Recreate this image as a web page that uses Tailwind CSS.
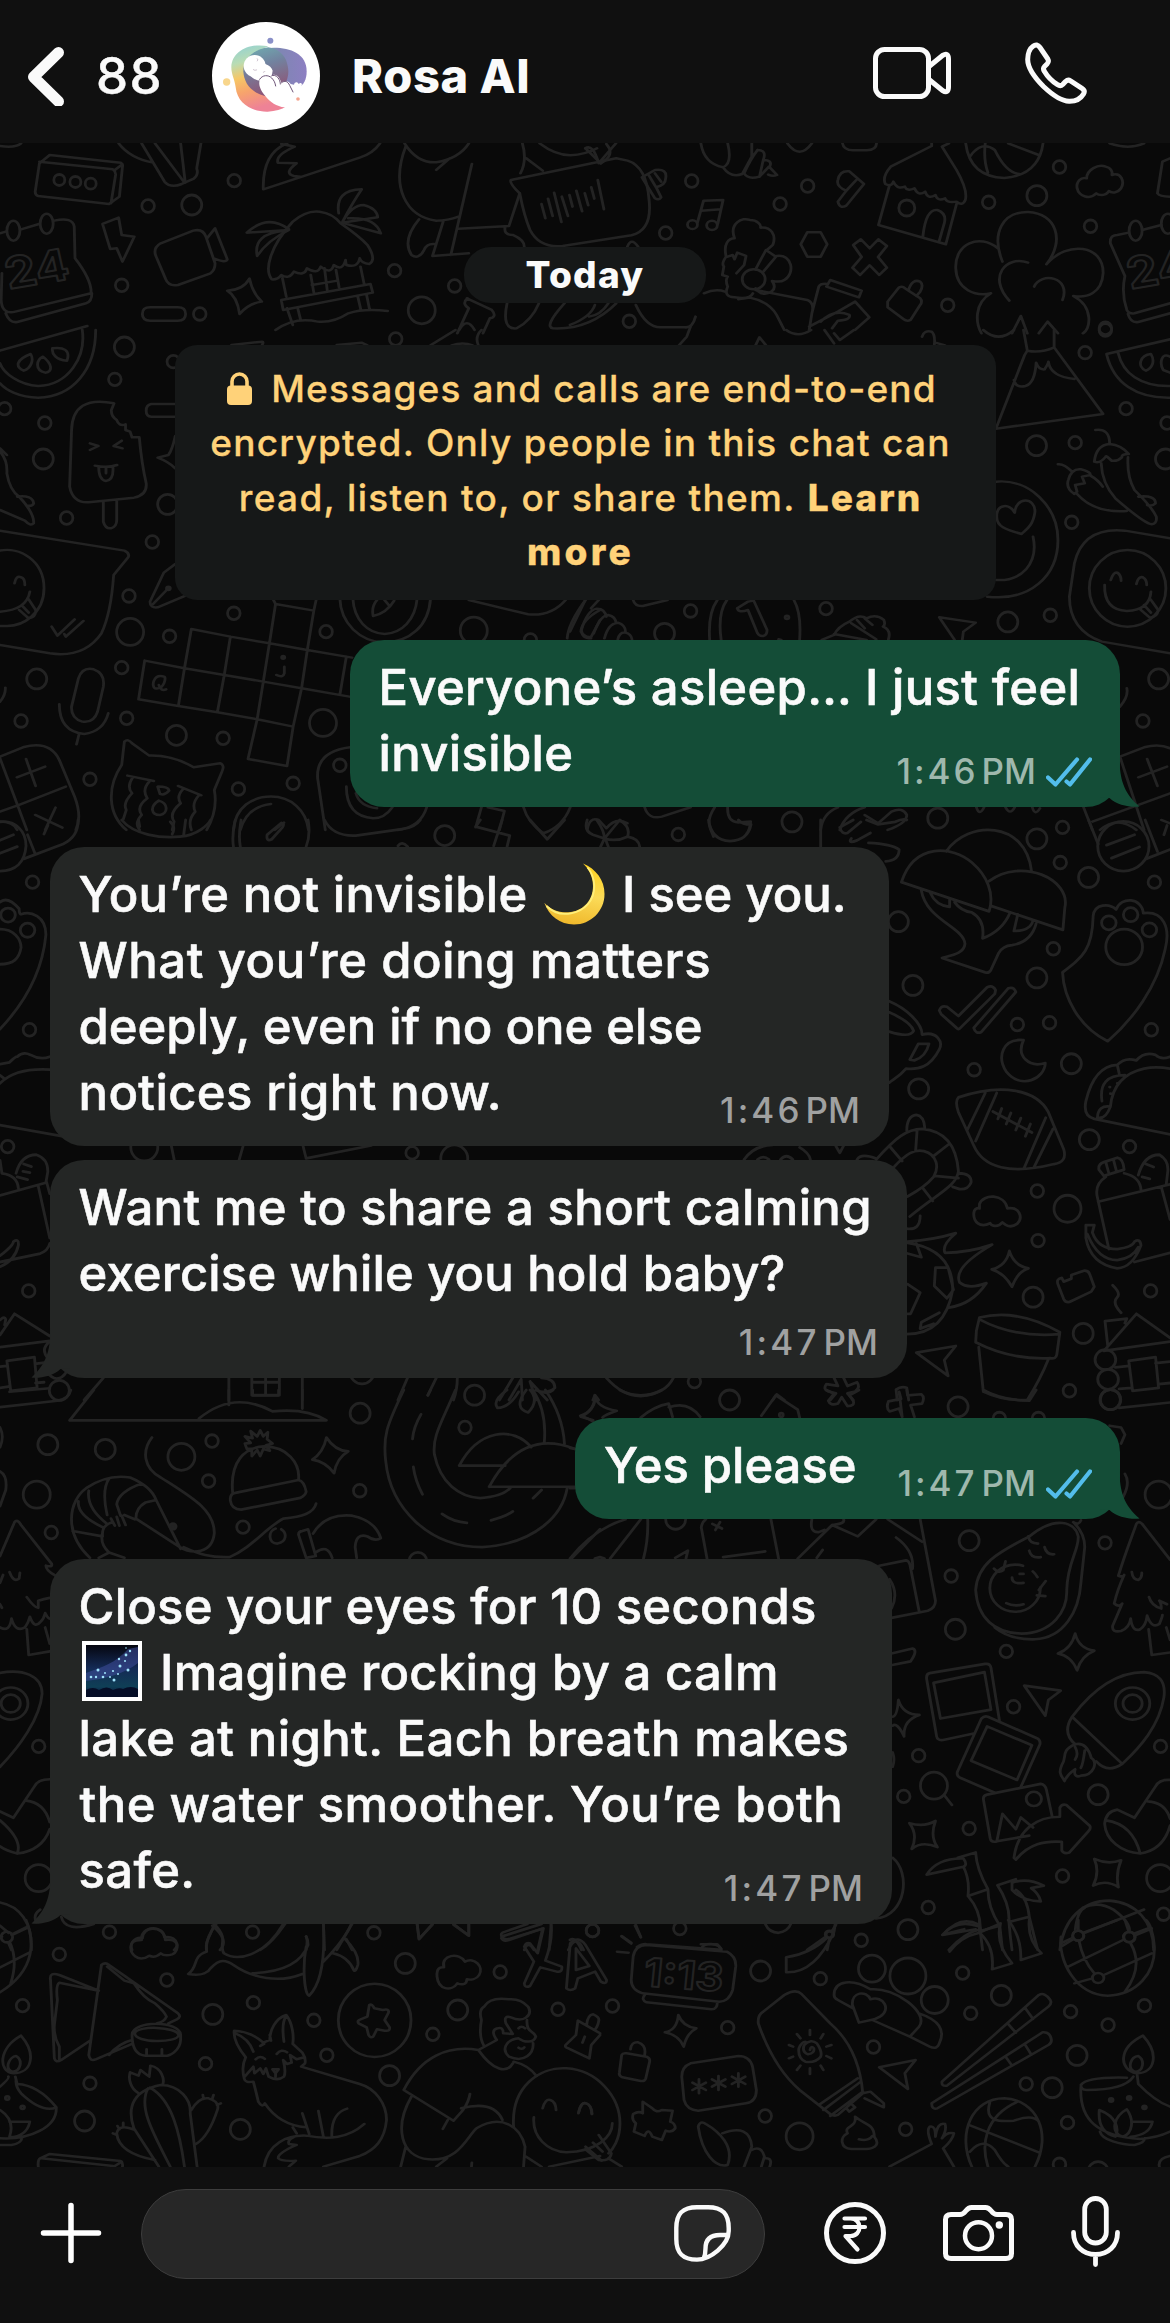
<!DOCTYPE html>
<html lang="en">
<head>
<meta charset="utf-8">
<meta name="viewport" content="width=1170">
<title>Rosa AI</title>
<script src="https://cdn.jsdelivr.net/npm/@tailwindcss/browser@4"></script>
</head>
<body class="bg-[#090909] font-['Inter',sans-serif] text-[#fafafa]">
<div class="flex h-[2323px] w-[1170px] flex-col overflow-hidden">

<header class="flex h-[143px] shrink-0 items-center bg-[#101010] pt-[9px] pr-[83px] pl-[27px]">
  <svg class="h-[60px] w-[38px]" viewBox="0 0 38 60" fill="none" stroke="#fafafa" stroke-width="11" stroke-linecap="round" stroke-linejoin="round"><path d="M31.5 6.5 6.5 31 31.5 55.5"/></svg>
  <span class="ml-[31px] w-[67px] text-[51px] leading-[60px] font-medium tracking-[1.5px] whitespace-nowrap [-webkit-text-stroke:0.4px]">88</span>
  <svg class="ml-[49px] size-[108px] rounded-full bg-white" viewBox="36 36 324 324">
    <defs>
      <linearGradient id="a1" x1="0" y1="0" x2="0.25" y2="1"><stop offset="0" stop-color="#8fd0d6"/><stop offset=".28" stop-color="#b9dcb4"/><stop offset=".5" stop-color="#f6c766"/><stop offset=".72" stop-color="#f7a46c"/><stop offset="1" stop-color="#ee8296"/></linearGradient>
      <linearGradient id="a2" x1="0" y1="0" x2="1" y2="0"><stop offset="0" stop-color="#77b3b5"/><stop offset=".5" stop-color="#7f86b4"/><stop offset="1" stop-color="#8d7fc2"/></linearGradient>
      <linearGradient id="a3" x1="0" y1="0" x2=".3" y2="1"><stop offset="0" stop-color="#6fb0b2"/><stop offset=".45" stop-color="#72829f"/><stop offset="1" stop-color="#8e5577"/></linearGradient>
    </defs>
    <path fill="url(#a2)" d="M160 122c60-18 160-14 160 62 0 24-8 42-26 50l-70 10-60-40z"/>
    <path fill="url(#a1)" d="M205 109C150 98 96 122 94 172c0 22 10 36 13 60 5 50 50 74 96 73 24-1 42-6 56-16l-40-30-60-30-20-50 20-50z"/>
    <path fill="url(#a3)" d="M205 112c-50 8-76 38-75 72 2 40 28 68 74 76l50-34c14-30 14-46 4-76-10-20-28-34-53-38z"/>
    <g fill="#fff"><circle cx="164" cy="168" r="33"/><path d="M150 196c10 12 24 18 38 16 4-8 16-6 24-12 6-6 4-12 6-18-2-8-10-16-22-20l-30-10z"/><path d="M178 214c4-14 20-20 36-14 2-8 16-8 22 2 4 6 6 10 8 16 8-8 22-6 28 4l10 2c2-8 10-10 14-2 8-8 14 2 6 10 6 10 2 24-8 28-2 22-18 34-40 32-24-2-44-16-58-34-12-14-20-28-18-44z"/></g>
    <g fill="none" stroke="#6d5578" stroke-width="3" stroke-linecap="round"><path d="M179 208c8-14 26-14 36-4 8 8 10 14 12 24M217 196c10-1 16 4 20 12 3 6 4 10 4 14M245 218c10-8 18-4 24 8l10 20"/><path stroke="#b9a9bb" stroke-width="2" d="M160 179q4 4 10 1M190 187q3 0 5-3M172 146q4 4 0 7"/></g>
    <circle cx="211" cy="92" r="9" fill="#8a90c8"/><circle cx="80" cy="216" r="11" fill="#f8d68c"/><circle cx="294" cy="267" r="5.500" fill="#f4a48e"/>
  </svg>
  <h1 class="ml-[32px] text-[47px] leading-[60px] font-extrabold tracking-[0.600px] whitespace-nowrap">Rosa AI</h1>
  <div class="mb-[6px] ml-auto flex items-center gap-[74px]">
    <svg class="h-[52px] w-[78px]" viewBox="0 0 78 52" fill="none" stroke="#fafafa" stroke-width="5" stroke-linejoin="round"><rect x="2.500" y="2.500" width="53" height="47" rx="9"/><path d="M56 19.500 69.500 8.500Q75.500 5 75.500 12V40Q75.500 47 69.500 43.500L56 32.500"/></svg>
    <svg class="h-[62px] w-[62px]" viewBox="0 0 62 62" fill="none" stroke="#fafafa" stroke-width="5" stroke-linejoin="round"><path d="M2.700 17.500C2.800 11 4 7 8 4.200Q12 1.200 15 5.500L22.800 17Q24.300 19.500 22 22L19.500 24.500Q17.500 26.500 19.500 29.500C23 35.500 27.500 39.500 32.500 42.700Q35.500 44.600 37.700 42.500L40.500 39.500Q43 37.200 45.500 38.800L57 46.300Q60.500 48.500 58.500 52C55.500 57 50 59.500 44 59.300C36 59 27 52.500 18.500 44.500C9.500 35.500 2.700 26 2.700 17.500Z"/></svg>
  </div>
</header>

<main class="relative h-[2024px] shrink-0 overflow-hidden">
  <svg class="absolute inset-0 h-[2024px] w-[1170px]" viewBox="0 143 1170 2024" fill="none" stroke="#232323" stroke-width="7.500" stroke-linecap="round" stroke-linejoin="round" aria-hidden="true">
    <g transform="scale(.3827 .3333)">
      <path d="M92 575 103 490 130 465 315 488Q322 492 320 500L312 590 285 612 100 588Q92 585 92 575ZM103 485 295 508Q303 515 302 525L290 610M300 510 320 493M0 438Q40 445 55 430"/>
      <path d="M310 430Q340 475 400 488M370 430 430 545Q445 565 475 552L505 537Q520 525 514 505L525 430M405 430 482 548M472 430 484 548"/>
      <path d="M750 430Q685 460 688 568L940 473Q975 460 993 430M735 432Q750 435 770 440 720 465 726 488L775 490Q740 520 768 528L785 530"/>
      <path d="M1057 430Q1090 490 1140 487 1200 475 1225 430M1140 510 1175 475M1060 440C1020 560 1060 650 1140 662Q1170 662 1198 650M1233 492 1178 765M1198 686 1330 678 1358 580M1095 658Q1050 720 1075 765 1095 780 1108 750 1115 730 1135 732M1158 665 1130 768 1225 760M1320 680Q1315 705 1340 705 1370 720 1370 740"/>
      <path d="M1365 430Q1378 480 1360 520M1375 475 1418 512M1335 540Q1330 550 1358 580 1370 650 1385 690 1410 745 1470 738L1650 706Q1705 690 1696 600 1690 500 1640 482L1610 475 1335 540M1410 430Q1450 465 1490 466 1530 464 1560 445M1530 445 1570 490"/>
      <path d="M1415 612 1425 655M1432 596 1444 648M1448 578 1467 666M1468 590 1484 648M1488 585 1496 620M1506 572 1521 634M1528 580 1537 616M1545 562 1553 596M1562 540 1578 628"/>
      <path d="M268 672 310 653 318 705 351 710 320 785 305 745 288 747ZM408 770Q398 745 420 730L505 692Q530 685 538 710L562 790Q562 810 550 820L465 855Q440 860 432 835ZM541 715 562 685 594 778Q590 790 560 776"/>
      <path d="M0 700 15 695M55 688 102 672M142 662Q190 650 194 680L196 775Q240 840 238 880L40 935Q5 945 3 900L5 820M15 940Q25 970 45 966L225 910Q240 905 240 880"/><ellipse cx="35" cy="692" rx="17" ry="30"/><ellipse cx="122" cy="671" rx="17" ry="30"/>
      <path d="M372 942Q372 922 392 922H465Q485 922 485 942T465 962H392Q372 962 372 942ZM652 836Q660 880 684 905 650 910 626 942 620 890 594 872 635 870 652 836Z"/>
      <path d="M710 838C690 810 705 740 765 665Q800 630 835 635 870 640 890 670 940 710 960 735 985 780 965 792 945 790 940 775 935 805 905 795 903 785 903 780 895 815 872 795 865 825 838 800 830 825 802 805 795 830 768 815 755 840 735 825 725 840 710 838ZM738 835 748 890M812 825 820 878M848 805 855 870M878 810 886 862M942 800 952 855M815 855 882 842M735 900 968 852 974 878 740 930ZM750 925 765 975M778 925 786 962M935 890 943 930M958 885 966 930M720 990Q770 950 830 965 870 970 910 940 950 925 1013 933"/>
      <path d="M885 640Q875 570 945 568 920 610 895 665 920 615 950 615 985 625 987 652L893 668 995 700Q980 650 910 655M755 688Q700 640 645 698L755 690Q700 720 672 768 660 700 745 692"/>
      <path d="M1220 895 1285 930Q1300 950 1280 955L1262 1000M1222 895Q1205 910 1225 925L1195 1000M1200 990Q1220 950 1240 990M1325 910Q1310 990 1350 985 1390 960 1408 910M1475 910Q1420 980 1445 985 1540 990 1610 910"/>
      <text x="22" y="868" transform="rotate(-11 22 868)" font-size="130" font-weight="700" font-family="Inter,sans-serif" stroke-width="6">24</text>
    </g>
    <g transform="translate(570 0) scale(.3827 .3333)">
      <path d="M40 445Q60 430 75 490L120 430M95 432Q120 465 80 490M188 532 222 510Q255 505 250 535 250 555 225 562L238 592Q232 602 222 595ZM205 524 225 562M222 520 238 545M333 668 349 602 400 600 386 672M343 632 394 628"/>
      <ellipse cx="320" cy="674" rx="13" ry="13"/><ellipse cx="371" cy="676" rx="14" ry="14"/>
      <path d="M342 430Q350 490 400 502 425 490 412 430M400 502Q420 535 450 522L475 470V430M455 520Q465 540 495 530L520 500 541 525Q530 530 518 524M490 450Q515 450 505 480L495 530M490 450Q470 480 455 520M505 480Q530 480 522 500M568 430Q600 480 632 430M712 430Q715 450 740 451H775Q800 450 801 430"/>
      <path d="M700 540Q705 510 730 514L768 552 722 617Q705 628 700 605L722 572Q695 560 700 540ZM722 572 748 540M838 500 945 438V430M838 500Q815 530 824 552 840 562 845 545 855 570 875 560 880 575 900 565 910 590 928 575 935 600 955 585 960 605 980 595 985 610 1010 605 1025 620 1033 600 1040 570 1010 510L972 440 990 430M835 555 806 675 982 733 1010 612M922 710Q930 625 960 630 985 640 978 670L965 722"/>
      <path d="M1034 430Q1045 530 1135 534 1225 525 1236 430M1085 430Q1080 480 1092 518M1045 470Q1075 420 1110 450 1140 520 1175 522M1145 430 1225 465M1410 430Q1460 450 1500 430M1568 475 1548 485 1535 580Q1540 590 1568 590"/>
      <path d="M1350 535C1350 510 1380 490 1400 500 1415 505 1418 515 1416 525 1440 515 1450 545 1440 565 1430 580 1415 580 1408 573 1400 590 1380 585 1375 580 1360 600 1330 590 1325 565 1322 545 1335 530 1350 535Z"/>
      <path d="M1130 785C1100 700 1130 635 1197 636 1270 640 1295 720 1245 793 1300 720 1395 735 1393 820 1390 880 1350 895 1315 888 1370 920 1360 990 1340 1000M1118 745C1070 700 1005 730 1008 805 1010 870 1060 890 1100 880 1055 910 1060 970 1075 1000M1197 788C1140 765 1090 830 1148 902M1213 860C1230 815 1310 830 1287 900"/>
      <path d="M1450 828 1412 730Q1410 705 1430 705L1460 698M1495 690 1545 675M1450 828Q1440 880 1455 930 1460 942 1475 940L1568 910M1458 942Q1465 970 1485 966L1568 940"/><ellipse cx="1478" cy="692" rx="17" ry="30"/><ellipse cx="1562" cy="671" rx="17" ry="30"/>
      <text x="1464" y="868" transform="rotate(-11 1464 868)" font-size="130" font-weight="700" font-family="Inter,sans-serif" stroke-width="6">24</text>
      <path d="M620 697H655L672 733 655 770H620L603 733ZM740 735 760 718 783 745 806 718 828 738 805 771 828 803 808 825 783 796 758 825 738 803 762 771Z"/>
      <path d="M408 770C400 730 415 715 430 715 415 670 450 650 470 660 490 660 500 675 498 683 525 680 540 705 530 735L515 750M412 770 425 765 430 778 437 758 460 768 455 795 435 820M408 770Q395 790 402 800L398 825 412 830Q405 840 412 860 400 890 430 892 470 900 478 880M512 750 538 770 505 815M512 750 485 808M540 768C580 760 590 820 560 840 550 848 540 845 528 843 545 870 520 885 500 880 490 875 488 870 485 865"/><ellipse cx="480" cy="838" rx="30" ry="30"/>
      <path d="M350 880Q380 865 405 875M440 898 470 893Q520 905 540 945L560 990M485 870 620 900Q640 910 632 940L625 990M632 940 650 860Q655 850 672 852M680 840 762 872 755 892 670 860ZM625 980 700 935 745 905 782 952 745 990M655 965Q690 925 730 945 735 960 700 962L685 985M830 905 860 862Q870 858 875 865L915 895Q922 905 915 915L890 960Q880 965 872 958L830 922ZM885 868Q895 835 915 845 925 855 915 875L905 888M172 915Q200 985 240 982H300Q320 985 328 950M150 740Q160 710 178 740M65 915Q55 950 0 975M100 910Q80 945 50 950M1155 1000 1178 948 1195 1000M1225 1000 1248 965 1275 1000"/>
    </g>
    <g transform="translate(0 330) scale(.3827 .3333)">
      <path d="M0 62 228 -12M250 0C250 120 190 200 100 203 50 203 15 180 0 160M215 0C225 80 180 165 100 168 50 165 10 130 0 100M62 122C40 110 40 90 80 72 90 90 80 115 62 122ZM118 128C90 120 95 90 112 80 135 100 140 125 118 128ZM175 92C145 90 135 70 137 55 165 50 185 60 175 92Z"/>
      <path d="M298 220Q190 195 187 300L182 470Q190 520 232 517L350 503Q385 495 382 460 370 400 364 322L345 322 340 305 328 300V283Q310 290 305 270 290 260 291 240ZM270 515V575Q275 597 290 595 305 590 305 570V510M235 340 257 348 235 360M318 332 297 348 320 355M248 407Q280 415 306 405M258 412Q258 450 277 453 298 450 295 410M277 412V430"/>
      <path d="M0 355 18 375M0 365Q20 390 18 430 25 480 50 500 90 550 88 580 80 590 65 572L0 540M45 500Q85 495 88 520 85 530 70 527M458 222H395Q382 225 382 242T395 260H458M458 318Q450 360 440 375L412 383Q440 395 458 415"/>
      <path d="M0 602 325 662Q340 670 335 682L297 735Q290 850 265 910 220 985 130 970L0 945M0 662C50 650 115 690 115 775 115 850 60 890 15 888H0M38 760Q42 735 55 742 65 745 65 765M0 845Q70 840 78 785M50 840 75 865Q95 862 93 840L75 808M60 830 75 848M135 890 150 917 195 868M168 912 172 920 218 873M458 702 428 728 392 815Q392 835 412 832L485 797M400 822 440 775"/>
      <circle cx="440" cy="775" r="5"/>
      <path d="M378 992 482 1015 500 897 602 920 586 1035 568 1147 466 1128 482 1015 586 1035 688 1055 672 1168 568 1147M378 992 362 1108 466 1128M602 920 704 940 720 822 710 800M704 940 688 1055 788 1075 803 960 704 940M720 822 820 842 826 810M820 842 803 960 920 983M905 980 888 1095M788 1075 913 1100M788 1075 766 1190 672 1168 648 1287 750 1308 766 1190"/>
      <path d="M429 1040C400 1030 395 1070 405 1075 430 1080 435 1040 429 1040ZM415 1065Q420 1085 434 1078M743 1010V1030Q740 1045 722 1035M205 1045Q215 1010 245 1018 275 1030 270 1070L255 1145Q245 1180 215 1175 185 1165 187 1130ZM155 1123Q155 1205 220 1212 270 1205 283 1150M206 1215 200 1243M0 1115Q15 1095 14 1073"/>
      <circle cx="740" cy="982" r="4"/>
      <path d="M0 1280 60 1252Q130 1230 155 1290L195 1400Q215 1460 198 1500M0 1285 70 1500M50 1425 172 1370M0 1445 50 1425M68 1287 93 1368M44 1342 118 1310M145 1433 118 1500M92 1455 163 1493M0 1475Q35 1475 45 1500"/>
      <path d="M318 1305 325 1235Q335 1225 345 1240L390 1277Q450 1275 506 1312L575 1300Q588 1305 580 1325L560 1380Q570 1440 540 1500M318 1305C280 1370 280 1450 330 1500M333 1337 402 1353M465 1368 526 1396M347 1342Q330 1370 345 1390 320 1420 330 1440L322 1468M390 1355Q370 1380 385 1405 355 1430 370 1455 350 1480 365 1500M478 1378Q460 1400 472 1420 440 1450 455 1475L450 1500M520 1396Q500 1420 510 1445 490 1470 500 1500M412 1370Q440 1370 442 1382 430 1398 418 1392ZM415 1412C390 1430 395 1455 418 1455 440 1450 440 1420 415 1412Z"/>
      <path d="M610 1500C615 1430 660 1400 708 1400 760 1400 800 1440 806 1500M628 1500Q645 1430 708 1422M718 1500 742 1478M888 805C890 880 940 935 1005 938 1070 935 1120 890 1125 805M922 805C925 870 960 910 1005 912 1050 910 1085 870 1090 805M985 810Q970 830 975 858 1010 850 1030 812M1003 808 1018 828M1225 810 1380 853Q1440 860 1478 810"/>
      <path d="M915 1252Q825 1265 830 1345L850 1500M905 1370Q905 1460 975 1465 1005 1465 1025 1432M930 1390Q940 1430 985 1435M1115 1432Q1100 1490 1040 1500M1258 1432 1243 1492M1275 1432 1318 1443 1305 1500M1368 1432Q1380 1480 1420 1510 1470 1490 1490 1432M1482 925Q1485 880 1530 810M1568 840Q1520 870 1518 905 1530 925 1545 920L1568 870"/>
      <path d="M605 45 685 35Q690 35 685 45M880 45 945 38 960 46M1125 46 1190 0M1250 46Q1240 20 1258 0M1180 46Q1210 35 1235 46"/>
    </g>
    <g transform="translate(570 330) scale(.3827 .3333)">
      <path d="M285 46 305 20 315 -10M485 46 495 22 512 46M565 0Q595 25 630 0M665 0 690 40M690 10 705 30 742 0M920 20Q925 0 945 5 955 15 952 45M955 38 980 46M1080 0Q1120 40 1160 0M1185 0 1195 62Q1230 70 1265 52V0M1195 62 1188 75 1113 296 1393 252 1265 52M1160 150Q1165 175 1190 168 1215 160 1218 98 1225 120 1240 118 1250 100 1250 95 1255 140 1318 147"/>
      <path d="M1402 72 1568 28M1402 72C1420 160 1480 205 1568 203M1432 68C1445 130 1490 170 1568 168M1505 122C1480 110 1490 75 1518 72 1530 95 1520 115 1505 122ZM1568 80C1545 65 1540 100 1550 120L1568 128"/>
      <path d="M1373 300Q1410 295 1410 340M1370 395Q1375 345 1410 342 1440 345 1460 372 1440 372 1442 382 1430 395 1415 392 1400 375 1400 380 1385 402 1370 395ZM1388 400Q1390 460 1425 505 1500 580 1520 583 1535 580 1532 560 1520 530 1475 480 1455 440 1458 382M1485 500Q1530 495 1530 520 1520 530 1508 525M1275 403Q1290 400 1312 425M1302 450Q1310 415 1335 418 1360 425 1360 435L1338 440 1345 460 1320 465 1325 485 1318 492Q1295 475 1302 450ZM1325 492Q1370 550 1455 543M1360 437Q1380 450 1392 470"/>
      <path d="M1113 455C1200 445 1275 530 1275 630 1275 740 1200 815 1090 800M1113 750C1180 755 1225 700 1210 620M1180 612C1140 600 1115 590 1115 560 1115 520 1150 520 1162 548 1165 500 1215 500 1215 545 1210 590 1190 600 1180 612Z"/>
      <path d="M1568 625 1450 602Q1340 590 1318 700L1305 800Q1305 900 1390 935L1568 970"/><ellipse cx="1457" cy="775" rx="100" ry="115"/>
      <path d="M1413 750Q1420 725 1430 728 1440 735 1440 752M1480 762Q1485 738 1497 742 1507 748 1507 765M1397 765Q1395 840 1455 843 1515 840 1518 785M1490 838 1515 863Q1535 862 1537 840L1517 808M1500 825 1518 848"/>
      <path d="M0 905 40 810M55 835 75 810M30 900Q45 840 70 836 90 835 95 860M30 900Q30 925 55 925M62 910Q80 855 100 855 120 860 120 880M90 925Q100 880 125 878 145 885 145 905M125 928Q130 905 145 908 160 912 162 928M165 810Q170 830 190 828L255 810M365 930Q360 850 385 810M395 930Q385 850 410 810M585 810Q605 850 600 930M437 835 465 815 480 812 515 900Q515 915 505 918 495 920 490 910L465 840Q440 850 437 835M545 928 552 930M658 930 690 915Q700 890 730 875 755 850 775 865 800 850 820 870 825 885 818 890 840 900 832 928M775 930 690 912M735 880 800 928M750 870 770 895M770 865 790 885M965 862 1060 878 1028 905 1025 930M965 862 1005 930"/>
      <circle cx="567" cy="862" r="5"/>
      <path d="M1437 1130Q1460 1100 1455 1075M1437 1280 1500 1252Q1540 1240 1568 1255M1342 1432 1365 1500M1437 1280 1500 1500M1365 1475 1568 1390M1508 1287 1535 1368M1485 1342 1560 1310M1545 1470 1568 1480M1385 1500Q1430 1455 1480 1500"/>
      <path d="M195 1432Q205 1470 240 1460L315 1432M45 1500Q50 1460 75 1470L95 1495Q120 1460 150 1480M378 1432C350 1480 370 1500 375 1520M412 1432Q410 1475 440 1478L472 1475Q470 1500 462 1510M655 1500Q660 1450 700 1432M705 1500Q720 1450 770 1432M805 1480 840 1445Q870 1430 880 1455 880 1480 830 1500M805 1480 770 1455M1062 1432Q1070 1460 1082 1432M1138 1432Q1150 1458 1162 1432M1208 1432Q1215 1460 1228 1435"/>
    </g>
    <g transform="translate(0 820) scale(.3827 .3699)">
      <path d="M0 5C40 0 68 30 68 70 65 115 40 138 0 138M62 105 165 65Q205 45 204 0M92 92 72 40M0 55 35 40M0 90 45 72M115 38 125 15M318 0C350 40 420 50 470 45 520 40 545 10 550 0M362 0 365 18M445 5Q460 20 450 38M485 0 480 40M610 72C605 40 612 15 615 0M628 72C622 40 628 15 630 0M805 0Q812 40 800 72M735 8Q745 10 738 20L710 52Q695 60 698 40ZM848 0Q870 45 930 42L1050 25Q1085 20 1098 0M1255 0 1243 18 1332 42 1325 72M1312 0 1290 70M1385 0 1430 52 1475 0M1040 70Q1050 55 1065 72"/>
      <path d="M0 222Q20 205 50 240 50 255 55 255C80 245 120 260 120 310 110 420 60 500 0 565M0 295C35 295 55 320 55 345 50 375 35 390 0 390M0 660 25 655Q40 640 45 640 60 625 80 635 105 650 130 640M0 712Q40 670 130 675M0 690 12 700M0 825 165 855"/><circle cx="21" cy="257" r="19"/><circle cx="72" cy="298" r="19"/>
      <path d="M0 920 5 955Q45 960 48 995M42 955Q55 905 95 905 125 915 125 950L120 980M62 930 82 937M60 950 78 953M45 965 72 972M0 1015 122 980 130 1010M100 990 130 1130M0 1195 105 1172Q125 1165 130 1145M0 1178Q35 1150 35 1140 50 1130 48 1150 40 1190 0 1208"/>
      <path d="M0 1392 38 1335 130 1395M0 1425 130 1408M0 1352Q12 1340 15 1350L12 1365M18 1462 90 1452 97 1535 28 1543ZM0 1478 18 1476M92 1470 130 1465M0 1535 22 1532M93 1522 115 1520M130 1410Q105 1430 125 1455M120 1490Q150 1530 175 1490M220 1568 270 1508M598 1508V1568M790 1508V1568M658 1508V1555H730V1508M694 1508V1555M658 1520H730M448 882 455 918M635 882 625 918M792 882 800 915 970 880M1040 1568 1065 1508M1140 1508 1118 1555M1195 1508Q1195 1540 1185 1568M1305 1568 1340 1508M1330 1568 1362 1512 1365 1568M1385 1518 1400 1568M1385 1518 1430 1568M1415 1508Q1450 1510 1450 1535 1435 1550 1410 1545"/>
    </g>
    <g transform="translate(570 820) scale(.3827 .3699)">
      <path d="M45 0Q35 30 60 40L90 50Q90 30 70 0M90 50 130 0Q160 20 150 45 120 60 90 50L80 72M92 50 100 72M150 45Q180 50 182 72M362 0Q370 55 418 57 465 55 473 12M440 0Q450 12 473 12M655 0V72M705 20 740 0M705 20Q710 40 725 35L760 5M735 50Q725 65 750 55L785 35M775 0 805 12 850 5Q870 -5 880 0M780 62Q840 65 860 80 860 110 825 112"/>
      <path d="M866 168C900 60 1000 70 1050 115 1090 150 1110 200 1095 247ZM983 85C1040 0 1190 0 1206 138M1095 165C1180 100 1310 160 1293 237L1288 297 1100 232M918 190C930 270 1030 290 1032 335 1030 360 1000 365 972 373L1085 412Q1095 415 1100 405L1120 360Q1130 340 1155 338 1205 330 1218 280M942 198Q955 230 992 235V215M1005 222Q1020 245 1050 250 1085 270 1078 320 1130 300 1150 250M1170 255 1160 300Q1205 300 1210 270"/>
      <path d="M1355 0 1380 65M1503 0 1535 85M1505 105 1568 80M1402 68 1475 40M1415 103 1488 73M1552 40 1560 15"/><circle cx="1446" cy="71" r="67"/>
      <path d="M1287 412C1340 370 1365 350 1367 260 1370 225 1410 225 1427 242 1440 205 1495 210 1498 252 1550 245 1570 290 1555 350 1535 450 1470 540 1405 598 1330 560 1290 480 1287 412Z"/><circle cx="1448" cy="343" r="48"/><circle cx="1408" cy="278" r="19"/><circle cx="1465" cy="256" r="19"/><circle cx="1514" cy="297" r="19"/>
      <path d="M965 515Q970 500 985 505L1015 530 1090 452Q1105 445 1112 460L1110 470 1020 562Q1015 568 1010 562L970 525ZM1055 562 1145 455Q1160 450 1165 465L1075 573Q1060 580 1055 562ZM834 490C880 510 920 550 920 580 960 570 975 600 965 620 940 670 910 675 878 672 860 695 845 700 834 710M834 520Q890 545 898 570 890 590 834 572M910 605H938Q930 640 900 650L888 648ZM1185 595C1130 590 1115 640 1140 680 1180 730 1240 700 1242 657 1200 670 1165 640 1185 595Z"/>
      <path d="M1015 750C1130 710 1220 730 1250 790L1290 890Q1300 925 1265 930C1150 960 1080 940 1055 880L1015 790Q1005 760 1015 750ZM1085 738 1038 838M1115 738 1060 868M1243 805 1187 940M1262 835 1212 940M1105 788 1207 845M1128 780 1118 808M1152 792 1140 822M1178 806 1165 838M1203 822 1190 855"/>
      <path d="M1568 850 1370 808Q1340 800 1348 760 1370 665 1430 662 1450 640 1480 650 1500 625 1530 635 1545 650 1568 640M1378 805Q1380 770 1412 775 1420 690 1500 672 1530 665 1568 672M1430 662 1435 685M1390 760Q1380 690 1450 690M1378 805Q1400 810 1412 775M1410 722h1M1430 712h1M1412 740h1"/>
      <path d="M880 840Q880 800 905 797 925 800 927 832M800 918C850 860 880 835 920 835 980 840 1010 880 1015 950 1010 990 960 1010 888 1072M845 940C880 900 900 890 925 895 960 905 965 940 950 965 930 990 905 1005 882 1018M907 838 903 895M988 878 948 910M1015 968 952 962M835 882 868 922M922 995 948 1030M1015 955Q1050 955 1048 980 1040 1000 1018 998L1000 992M915 1070Q915 1110 880 1105M695 882 705 900 715 880M455 918Q480 880 530 878M600 885Q625 900 628 918M490 918Q505 905 520 918M550 918Q565 900 582 918M750 918Q760 900 800 915"/>
      <path d="M1070 1038C1080 1010 1135 1010 1143 1050 1175 1045 1185 1075 1168 1092 1150 1105 1138 1095 1130 1088 1115 1105 1100 1095 1098 1090 1070 1105 1055 1085 1055 1065 1055 1050 1065 1048 1070 1050Z"/>
      <path d="M882 1140Q950 1135 1008 1117 970 1150 980 1170 1040 1170 1103 1148 1000 1210 1018 1250 1040 1270 1088 1252 1050 1310 990 1318M882 1143Q1000 1160 1000 1270 980 1390 880 1390M905 1145 918 1182 882 1172M955 1210H988L1002 1270 985 1293 952 1260ZM882 1255 915 1278 890 1335H882M965 1332 918 1358 915 1375 950 1362M1148 1165Q1160 1205 1198 1212 1170 1220 1155 1262 1135 1225 1102 1215 1140 1205 1148 1165Z"/>
      <path d="M1062 1380 1070 1345Q1170 1320 1280 1385L1272 1445Q1270 1458 1255 1455 1150 1460 1060 1412ZM1070 1350Q1160 1400 1278 1390M1068 1425 1080 1545Q1130 1570 1195 1568 1230 1510 1250 1458M905 1440 1008 1422 978 1460 988 1503ZM1275 1255Q1270 1240 1285 1238L1290 1248 1310 1240 1310 1230 1345 1218Q1355 1218 1358 1228L1370 1262 1362 1275 1305 1303Q1295 1305 1290 1295Z"/>
      <path d="M1382 945Q1380 930 1395 925L1430 913Q1445 915 1448 945L1395 962ZM1400 925 1408 955M1420 918 1428 950M1400 965Q1370 985 1378 1020L1408 1160M1448 955Q1490 965 1492 1000M1485 960Q1500 905 1540 905 1565 920 1562 950L1558 985M1505 930 1525 938M1495 965 1515 970M1380 1032 1568 985M1545 992 1568 1080M1475 1195 1568 1170M1348 1095H1370L1365 1115Q1380 1160 1430 1160 1470 1155 1475 1140 1490 1130 1492 1150 1470 1210 1430 1212 1360 1200 1348 1130ZM1352 1120Q1380 1190 1430 1190 1470 1185 1485 1155"/>
      <path d="M1418 1258Q1440 1280 1430 1290 1415 1305 1440 1332M1395 1435 1480 1335 1568 1400M1398 1355 1455 1348 1450 1360M1398 1355 1405 1420M1395 1435 1568 1410M1460 1462 1530 1452 1538 1535 1470 1543ZM1425 1480 1462 1476M1530 1468 1568 1464M1435 1538 1468 1535M1538 1525 1568 1522"/><circle cx="1399" cy="1459" r="27"/><circle cx="1406" cy="1512" r="27"/><circle cx="1412" cy="1567" r="27"/>
      <path d="M95 1508Q140 1560 190 1557 250 1550 270 1508M60 1568 65 1555 75 1568M690 1508 700 1530 670 1525Q660 1540 675 1545L695 1550 680 1568M715 1508 725 1530 750 1520Q760 1535 745 1545L725 1550 740 1568M530 1568 540 1553 560 1568M855 1568 852 1540Q865 1530 880 1535L885 1568"/>
    </g>
    <g transform="translate(0 1390) scale(.3827 .3571)">
      <path d="M0 48 150 30Q180 25 185 0M25 5 130 -5M245 0 182 85H853Q800 50 712 60 610 0 520 80M598 0V42M790 0V52M660 0V15H728V0M0 105Q12 130 0 160M0 228Q20 240 15 280L0 325M397 133C370 170 375 220 420 245 500 300 560 335 560 400 555 460 500 460 470 440L355 360Q355 330 380 315L408 308Q395 270 340 245 280 235 225 275C180 310 165 400 235 470M325 470 285 455 258 470M408 308 472 445M232 282Q225 330 280 375M285 248Q265 280 280 350M370 262Q310 285 305 320L315 352M205 312Q200 350 270 385M190 395 268 410M268 410Q265 380 290 372M285 455Q260 430 268 400M290 360 300 380M305 355 312 380M318 352 328 378M325 350 352 362M480 440C520 460 550 470 600 468 660 440 690 390 740 360 790 355 820 345 826 318M720 388C700 395 700 430 725 430 750 425 750 400 735 390"/>
      <circle cx="452" cy="382" r="8" fill="#232323"/>
      <path d="M608 288C600 200 640 160 690 158 750 158 785 205 780 252M602 310Q600 290 615 288L780 252Q795 255 800 285 798 295 785 302L630 335Q605 335 602 310ZM645 165 640 150 655 148 640 130 660 135 655 115 672 130 680 113 688 130 700 118 698 138 712 150 695 155 705 170 688 165 680 185 672 168 658 185 658 165ZM853 133Q875 170 910 172 880 190 873 233 850 200 816 195 845 175 853 133Z"/>
      <path d="M1055 0C1010 100 1000 130 1008 200 1020 330 1120 440 1260 440 1400 430 1470 350 1482 275M1190 0C1150 100 1130 130 1135 180 1150 260 1200 300 1255 303 1290 300 1320 290 1333 275M1125 0 1118 15M1100 68Q1080 105 1078 137M1080 215Q1085 255 1104 292M1155 347Q1185 370 1220 372M1283 365Q1320 355 1340 340M1393 303 1415 280M1200 212C1250 110 1340 100 1388 160M1200 212H1320M1278 271C1340 150 1420 130 1502 165M1278 271H1502M1392 0Q1430 60 1422 150M1425 0Q1470 70 1475 150M1325 0Q1285 30 1300 50 1330 50 1355 5M1375 0Q1340 50 1380 63 1410 30 1385 0M1400 0Q1430 15 1445 0M1555 20Q1555 55 1518 75L1550 85"/>
      <path d="M780 405Q780 395 790 395L805 390 825 465 800 470ZM818 402Q850 345 920 352 980 365 995 415 980 425 960 410 930 400 928 440L932 470M825 455Q855 430 868 470M1495 470 1568 390M0 465 38 370Q45 360 55 378L135 487Q138 497 120 492 120 505 145 520M25 510Q35 540 50 528L52 512M0 540 8 518M70 580Q90 610 100 610V590Q115 585 130 582M0 665Q25 680 30 640 40 680 65 665 75 650 78 635 90 670 105 650 115 640 118 625 125 640 130 640M70 670 75 742 130 732M118 665 130 710M0 600 5 610"/>
      <path d="M0 792C60 780 110 800 110 850 105 920 50 1000 0 1055"/><circle cx="28" cy="878" r="45"/><circle cx="28" cy="878" r="25"/>
      <path d="M130 1090Q100 1090 90 1110L35 1198 0 1180M68 1150Q115 1155 130 1210M130 1230Q110 1290 45 1298 15 1290 0 1278M0 1205Q60 1260 45 1298M105 1455Q85 1470 95 1490M160 1475Q170 1520 245 1495M0 1435C50 1445 85 1490 82 1568M22 1520 0 1500M30 1525 68 1505M22 1548 30 1568"/><circle cx="18" cy="1532" r="15"/>
      <path d="M370 1540C365 1500 430 1495 432 1540 460 1535 470 1555 455 1568M370 1540Q335 1540 345 1568M565 1495Q535 1540 540 1568M555 1500Q600 1540 575 1568M745 1495Q710 1550 680 1568M845 1495 848 1568M920 1495 880 1568M800 1530Q805 1540 800 1568M905 1538 920 1568M1090 1495 1095 1538 1130 1497M1185 1497 1225 1528V1497M1312 1530 1415 1495M1310 1535Q1315 1545 1330 1540L1418 1508 1405 1568M1440 1497 1435 1568M1485 1568Q1505 1520 1525 1568M1370 1568Q1380 1540 1395 1568"/>
    </g>
    <g transform="translate(570 1390) scale(.3827 .3571)">
      <path d="M65 15Q70 50 122 58 90 70 85 77M65 15Q65 60 27 72 50 80 60 88M130 0Q185 30 240 0M185 77Q220 45 258 38L268 75M258 48Q310 30 340 75M500 72 538 15 595 55 600 77M670 0 690 10 675 30Q680 45 700 38L710 20 725 45Q745 45 740 30L730 15 755 0M880 0 882 15 918 12Q928 20 920 38L890 42 900 75M868 75 860 52 835 60Q825 50 832 32L865 25 860 5ZM1080 0Q1130 30 1200 30L1218 0M1435 50 1568 35M1410 100 1440 105 1450 125 1440 150M1450 235Q1465 260 1445 300M0 162 13 165M0 275H13"/>
      <circle cx="552" cy="70" r="5"/>
      <path d="M0 472Q60 390 145 362M105 472 185 362M192 472Q205 420 203 362M358 472 343 385Q345 370 355 362M525 362 545 472M372 375 397 388M392 370 380 392M400 468 510 452M275 470 308 450 303 472M65 472 78 468 90 472M632 362Q625 400 650 398L665 392M595 472 685 378 752 410 800 362M685 378Q720 375 715 362M645 470 660 448M830 362 920 425M915 362 955 590Q955 610 935 618L840 638M852 413Q900 450 895 500M808 492 878 477Q885 478 888 488L912 618M835 530Q860 570 840 612"/>
      <path d="M1200 410C1130 450 1065 480 1060 560 1065 640 1110 680 1180 682 1260 680 1300 620 1298 560 1300 480 1330 450 1328 410 1320 370 1270 350 1200 410ZM1110 665Q1150 700 1215 698C1290 695 1330 620 1335 540L1345 440Q1345 400 1315 370 1330 380 1335 365"/><circle cx="1163" cy="555" r="66" stroke-dasharray="330 30 20 30"/>
      <path d="M1108 500Q1120 515 1132 505L1138 480M1225 560 1243 535M1220 575 1242 577M1155 525Q1155 545 1185 540M1140 597Q1160 608 1185 600M1175 515h10M1198 410Q1200 430 1223 430M1240 440Q1245 462 1265 460M1200 450Q1205 472 1230 468M1320 682Q1330 725 1370 730 1335 745 1325 785 1310 745 1275 738 1310 725 1320 682Z"/>
      <path d="M1433 520C1450 460 1465 420 1480 375Q1485 365 1495 375L1568 475M1433 520Q1445 525 1448 518 1430 560 1422 598 1435 610 1443 598 1430 630 1418 660 1415 680 1440 675 1462 665 1465 640 1470 680 1490 670 1505 660 1508 632 1520 670 1540 655 1548 635 1548 630M1468 510Q1470 530 1485 532 1495 525 1494 512M1513 580Q1520 605 1545 612 1545 595 1540 590L1560 600M1512 670 1520 742 1568 735M1558 665 1568 700"/>
      <path d="M840 738 895 724Q910 728 890 760L842 770M843 940Q855 930 873 970 870 925 913 910 870 910 858 868 855 915 842 915M843 1015Q850 1035 843 1055M932 810Q930 795 940 793L1085 767Q1098 765 1100 778L1122 925M932 810 958 970Q960 982 975 980L1055 962M950 820 1083 790 1100 895 968 920ZM1075 920Q1082 912 1092 915L1220 975Q1230 980 1228 992L1178 1112M1075 920 1012 1070Q1010 1080 1018 1085L1110 1128M1090 942 1207 995 1168 1092 1048 1038ZM1187 828 1282 842 1250 868 1242 912ZM978 1135 998 1162"/>
      <path d="M1108 1265Q1100 1265 1098 1255L1080 1145Q1080 1135 1090 1133L1230 1103Q1242 1105 1245 1120L1260 1195M1108 1265 1200 1248M1115 1265 1130 1187 1165 1230 1178 1197 1210 1225M1160 1310C1170 1230 1220 1195 1280 1195V1170Q1285 1158 1297 1162L1358 1220Q1362 1228 1355 1235L1305 1295Q1290 1300 1285 1290V1265C1240 1262 1200 1270 1165 1315Z"/><circle cx="1212" cy="1145" r="20"/>
      <path d="M1312 915Q1400 790 1500 790 1560 795 1552 860C1540 940 1490 1000 1443 1047ZM1312 915Q1285 960 1320 992M1375 1040Q1405 1075 1443 1047M1320 992C1280 1010 1300 1030 1285 1050 1275 1075 1285 1080 1292 1095 1300 1075 1310 1070 1320 1062 1315 1080 1325 1085 1335 1080 1370 1080 1380 1040 1362 1030M1320 992Q1350 985 1362 1030M1320 1000Q1330 1020 1320 1035M1345 1010Q1340 1050 1335 1058"/><circle cx="1470" cy="878" r="45"/><circle cx="1470" cy="878" r="25"/>
      <path d="M1568 1092Q1540 1090 1530 1110L1475 1198 1430 1175Q1400 1180 1397 1215C1400 1260 1440 1295 1490 1298 1540 1290 1560 1250 1568 1220M1510 1152Q1555 1155 1568 1200M1400 1205Q1470 1215 1490 1298M887 1213Q925 1225 955 1207 940 1250 960 1280 920 1262 893 1285 910 1245 887 1213ZM1370 1313Q1405 1330 1440 1317 1425 1355 1433 1392 1400 1370 1367 1388 1385 1350 1370 1313Z"/>
      <path d="M932 1357Q960 1310 1028 1312 1040 1330 1028 1335L932 1357M1013 1310 1060 1295Q1062 1340 1092 1398L1040 1417Q1045 1370 1028 1335M1092 1398Q1092 1450 1123 1500L1072 1515Q1075 1460 1040 1417M1123 1500 1130 1568M1072 1515 1078 1568M1117 1387 1165 1370M1117 1387Q1150 1440 1147 1490L1200 1475Q1195 1420 1165 1400M1147 1490Q1150 1530 1155 1568M1200 1475 1222 1568M1155 1380Q1195 1365 1238 1388L1205 1395Q1225 1410 1230 1432 1180 1430 1155 1400ZM975 1525Q1020 1470 1068 1497L1072 1515M975 1525 1030 1510M990 1568Q1030 1520 1072 1510M843 1310C890 1350 880 1470 800 1480"/>
      <path d="M1280 1568C1290 1480 1340 1430 1410 1430 1480 1435 1525 1490 1525 1568M1340 1450Q1380 1430 1420 1455 1465 1490 1462 1518M1320 1515Q1325 1460 1345 1450M1345 1520 1500 1455M1282 1550 1312 1535M1475 1528 1520 1508"/><circle cx="1328" cy="1528" r="14"/><circle cx="1462" cy="1532" r="15"/>
      <path d="M135 1530 160 1550M170 1500 185 1532M0 1540Q15 1530 30 1568M175 1560Q190 1550 200 1552L395 1568M342 1552H385L395 1565M510 1495Q520 1520 545 1520 570 1515 577 1495M620 1568Q650 1545 670 1530M695 1497 685 1515M678 1535 672 1568"/><circle cx="678" cy="1525" r="9"/>
    </g>
    <g transform="translate(0 1920) scale(.3827 .3333)">
      <path d="M68 0C90 60 95 150 0 217M0 48 5 50M32 45 68 25M25 65Q48 120 28 190M0 142 78 97M342 80C345 55 365 50 372 55 375 15 425 15 430 52 470 45 470 95 450 103 435 108 425 105 420 100 405 115 395 110 390 107 360 130 340 100 342 80ZM540 95C535 60 550 50 560 12 600 60 570 70 585 100 620 125 690 110 740 12M540 95C500 110 520 140 492 162 530 170 545 155 550 145 575 115 590 120 610 135 660 175 730 190 790 162M660 160Q780 155 805 75 805 60 800 50M800 80C790 140 795 225 808 227 840 190 850 120 845 12M845 125Q900 60 918 12M900 55Q940 100 935 135 930 155 925 152 910 110 870 100M1090 12 1095 57 1130 12M1185 12 1225 47V12"/>
      <path d="M1142 170C1140 145 1150 140 1160 142 1150 105 1200 95 1215 125 1240 110 1265 140 1252 165 1245 178 1230 180 1220 178 1220 195 1205 195 1195 190 1180 215 1145 210 1142 170Z"/>
      <path d="M1312 52Q1305 38 1320 35L1378 12M1312 52Q1320 62 1335 55L1420 25 1405 100 1385 70Q1375 65 1370 80L1395 125 1370 190Q1370 205 1385 198L1412 142 1455 155Q1470 158 1468 140L1425 122Q1445 60 1440 12"/>
      <path d="M258 212 155 165Q128 155 132 180L142 415Q145 430 160 420L235 362M258 212 155 188Q145 195 150 240L142 315Q140 350 155 380V420M265 135Q275 125 285 135L465 280Q475 290 462 298L440 310M265 135 232 405Q235 425 250 418L345 372M280 140 325 182 350 190Q375 235 405 250 430 275 435 290 430 305 410 310M345 360Q310 370 285 405M345 345C345 300 470 300 472 345V360C470 395 440 408 435 407H380C355 405 345 380 345 345M352 340C352 370 465 370 467 345 460 320 360 315 352 340ZM383 388V405M423 388V405"/>
      <path d="M35 460C-5 455 -5 385 55 347 95 400 85 460 35 460ZM32 455C10 445 25 410 42 408 60 420 55 455 32 455M40 470 45 492Q100 495 147 562 110 580 55 520 40 500 42 480M0 500Q25 475 22 470M147 562C150 620 80 660 0 655M0 570Q40 600 25 650M25 605H78Q70 650 25 652M0 675H30Q55 670 57 655"/><circle cx="19" cy="534" r="5"/><circle cx="59" cy="562" r="5"/>
      <path d="M100 740Q98 720 105 715L130 702 315 723Q322 728 320 740M108 715 295 738M300 738 318 725M362 520C340 505 335 475 340 457L362 467 367 450 390 470 393 437C425 445 430 480 425 495M415 740 350 625C330 560 350 510 420 495 470 495 500 540 497 580L515 740M445 740C400 640 360 560 387 505M392 503C450 540 470 640 482 740M500 570Q520 530 545 535 575 545 568 570 545 650 512 672M352 630Q310 610 305 640 310 700 405 720M532 537 530 525M555 535 558 525M567 555 577 550M322 620V608M312 628 307 618M305 645 295 640"/>
      <path d="M642 412C620 380 610 350 612 332 650 335 670 350 688 368L705 360C705 330 720 295 748 285 765 310 768 350 765 372L790 398Q800 415 797 430L787 440 940 492C980 505 1010 550 1010 600 1005 660 980 690 940 708L845 740M642 412Q630 440 638 475 640 490 662 485 670 520 675 545 685 565 692 550 730 615 800 622M615 340Q650 355 662 395M742 365Q735 310 747 290M690 370 680 378 690 372M705 345 708 362M638 472 662 440 665 460 680 445 688 462 695 445 702 470Q725 485 742 470 748 455 740 420L750 432 762 428 758 405 775 418 795 412M668 418Q680 405 692 417M723 402Q735 385 750 397M712 448H728L720 460ZM720 460V470M790 580 808 642M832 573 845 650M867 648Q865 580 907 566M765 622 775 640M690 740C700 670 750 645 800 647 860 660 910 655 952 612M770 650Q750 660 755 672L775 675Q725 700 727 715 735 725 773 722L755 740"/>
      <path d="M965 255Q972 250 978 265L1000 270Q1018 265 1015 278L1005 300 1018 322Q1020 335 1005 332L985 328 975 350Q968 355 963 345L958 322 937 310Q932 302 942 298L960 290ZM1250 390C1170 375 1100 410 1055 510L1185 602 1210 570Q1225 545 1228 522M1170 600 1157 627M1075 530C1030 620 1045 710 1120 718 1200 725 1220 650 1245 625 1310 580 1360 620 1372 680L1368 740M1205 565Q1290 540 1313 600M1060 680 1047 740M1140 740 1168 715M1233 728 1232 740M1375 710 1415 740M1250 390C1290 455 1325 460 1340 430M1250 390 1298 360Q1280 330 1300 325 1315 320 1315 340L1340 342 1322 310Q1315 285 1335 292 1360 305 1375 292 1390 280 1380 260 1360 235 1330 238 1280 230 1265 260 1250 270 1258 300 1250 350 1265 378M1377 300C1375 340 1395 330 1400 350 1395 370 1370 368 1355 355 1320 360 1310 390 1330 410 1370 430 1395 400 1393 370M1355 325Q1362 315 1372 325M1355 383Q1365 390 1370 382M1342 425Q1380 435 1402 468"/>
      <path d="M1342 620C1335 500 1410 440 1480 445 1560 450 1620 530 1620 610 1620 660 1600 690 1590 700M1418 565Q1425 535 1438 540 1452 545 1453 570M1512 578Q1518 545 1532 550 1546 555 1547 582M1395 592C1390 650 1430 695 1480 697 1560 695 1600 650 1600 610M1530 680 1572 722M1435 740 1568 708M1510 302 1568 340M1510 302 1505 345 1478 375Q1475 382 1485 385L1540 415 1545 375 1568 345M1533 315Q1535 285 1550 283 1565 290 1565 300 1562 320 1555 328M1528 350 1522 368"/>
      <path d="M1480 205 1490 70Q1510 45 1530 75L1585 180Q1585 195 1570 185L1555 155 1510 175 1503 205Q1490 215 1480 205ZM1505 85 1505 150 1540 138Z"/><ellipse cx="979" cy="301" rx="95" ry="110"/>
    </g>
    <g transform="translate(570 1920) scale(.3827 .3333)">
      <path d="M200 75 410 95Q435 110 433 140L425 210Q415 245 390 245L190 220Q160 210 160 180L165 110Q170 75 200 75ZM195 225Q185 240 200 247L370 268Q385 268 385 247M343 85Q350 70 370 72 395 75 395 92M123 95 153 98M135 48 160 68M172 15 185 52M248 337Q280 330 283 285 295 320 330 325 305 340 297 380 285 345 248 337ZM158 388Q160 365 178 367 200 375 195 405M135 405Q138 398 148 400L200 410Q210 415 208 425L198 475Q195 485 185 483L137 472Q127 468 129 458Z"/>
      <text x="190" y="197" transform="rotate(5 190 197)" font-size="118" font-weight="700" font-family="Inter,sans-serif" stroke-width="6" textLength="208" lengthAdjust="spacingAndGlyphs">1:13</text>
      <path d="M315 430 440 408Q470 408 477 440L487 510Q487 545 460 550L335 572Q305 570 298 540L292 470Q292 440 315 430ZM337 478V520M320 488 355 510M320 510 355 488M388 468V510M371 478 406 500M371 500 406 478M440 460V500M423 470 458 492M423 492 458 470"/>
      <path d="M190 545 215 565Q225 580 240 570L268 572 262 605Q275 610 275 625 265 640 250 632L240 660 215 650Q205 620 195 648L167 635 172 610Q160 600 165 582 180 572 190 580ZM335 620Q340 600 355 612C390 635 430 680 412 735 380 745 345 700 335 620ZM398 640Q470 610 475 680L455 740M475 690Q500 675 508 710L500 740M512 715Q530 715 522 740M22 580Q28 545 42 550 56 555 57 582M40 688 75 720Q105 725 108 700L75 645M60 668 85 695M100 715 135 740"/>
      <path d="M560 225Q590 205 605 222L680 310C740 370 760 450 765 520L700 585Q690 590 680 582L600 510C540 450 510 370 492 310Q490 285 505 275ZM650 555 752 475M662 570 760 485M680 588 765 515M765 520 785 515 820 550V562L770 535M722 565 730 575 745 562 738 555"/>
      <path d="M627 390Q630 375 637 385 640 400 622 403 605 395 612 375 630 355 645 370 660 395 655 410 640 430 615 425 595 415 598 385 605 365 615 365M627 330V345M627 445V462M593 342 602 355M662 342 655 355M572 375 583 380M683 375 670 380M572 415 583 410M683 415 670 408M593 450 602 437M662 450 655 437"/>
      <path d="M690 225C690 180 740 175 785 208C850 200 940 280 912 320L888 350 940 380Q960 390 965 370 990 310 912 280M690 225Q690 235 700 240L740 265M790 300 888 350M755 308 738 255C735 215 775 210 785 238 820 225 840 270 810 290L795 298ZM808 442 903 420 875 460 883 507ZM1225 225Q1240 215 1255 240 1260 250 1250 260L985 497Q970 500 972 485ZM1190 265 1210 297M1145 312 1165 338M1235 337Q1255 335 1258 360 1258 370 1250 375L960 565Q945 570 945 550ZM1188 372 1205 403M1138 410 1155 437"/>
      <path d="M565 157V112Q630 100 670 55M565 157Q640 160 690 35L693 12M973 45Q1010 -5 1070 20L1075 35M973 45 1060 28M992 95Q1020 50 1070 38M1070 0V38Q1110 80 1103 148L1155 130Q1110 70 1125 10L1070 38M1145 0Q1180 50 1178 120L1232 100Q1195 60 1200 0M1283 50C1275 120 1320 225 1405 227 1480 225 1530 160 1527 80 1525 40 1515 10 1505 0M1283 80 1315 58M1342 38 1430 0M1475 40 1510 25M1328 0V30M1330 62Q1340 120 1370 160M1450 0 1460 35M1465 70Q1500 140 1450 215M1298 142 1445 60M1318 190 1365 175M1395 165 1520 100"/><circle cx="1328" cy="47" r="15"/><circle cx="1461" cy="51" r="15"/><circle cx="1380" cy="174" r="15"/><circle cx="678" cy="43" r="11"/>
      <path d="M745 590C770 615 795 610 795 650 810 670 800 685 775 687H735C705 685 705 650 725 640 715 615 750 625 745 590ZM755 658Q780 665 790 648M835 740 945 672M975 685 1003 740M945 672Q930 630 940 620 955 615 955 650 960 605 980 612 985 630 972 655 985 635 1003 640 1000 660 975 685"/>
      <path d="M1050 740C1010 640 1050 535 1135 535 1220 540 1260 640 1215 740M1042 615 1225 697M1097 548C1080 610 1130 605 1160 602 1190 590 1215 590 1225 605M1170 545C1080 590 1075 680 1092 740M1045 695Q1080 650 1110 690 1130 730 1145 740"/>
      <path d="M1480 460C1435 450 1430 385 1497 347 1540 400 1530 460 1480 460ZM1475 455C1455 445 1465 410 1485 408 1502 420 1500 455 1475 455M1482 465 1485 492Q1530 545 1568 560M1472 470Q1450 510 1350 510 1335 510 1335 495 1350 470 1455 473M1335 500C1330 600 1380 650 1490 657 1520 655 1550 645 1568 635M1383 570C1380 610 1390 640 1425 650 1435 630 1430 590 1383 570ZM1455 568C1420 590 1410 640 1445 650 1470 640 1475 600 1455 568ZM1468 605H1522Q1515 645 1465 650M1385 635C1390 660 1440 675 1475 675 1495 670 1500 665 1502 655M1540 740Q1535 715 1568 708"/><g fill="#232323"><circle cx="1414" cy="540" r="5"/><circle cx="1461" cy="534" r="5"/><circle cx="1501" cy="562" r="5"/></g>
    </g>
    <g id="bubbles" stroke-width="2.800"></g>
  </svg>

  <div class="relative flex flex-col items-start">
    <div class="mt-[104px] ml-[464px] flex h-[56px] w-[242px] items-center justify-center rounded-[27px] bg-[#161818] text-[37px] font-extrabold tracking-[1.300px]">Today</div>

    <div class="mt-[42px] ml-[175px] flex h-[255px] w-[821px] flex-col items-center rounded-[22px] bg-[#161818] pt-[17px] pr-[10px] text-[37px] leading-[54.330px] font-medium whitespace-nowrap text-[#ffd279] [-webkit-text-stroke:0.3px]">
      <p class="flex items-center pl-[3px] tracking-[1.180px]"><svg class="mr-[19px] mb-[1px] h-[33px] w-[25px]" viewBox="0 0 25 33"><rect y="13.500" width="25" height="19.500" rx="4" fill="#ffd279"/><path d="M5 16V9.500a7.500 7.500 0 0 1 15 0V16" fill="none" stroke="#ffd279" stroke-width="3.600"/></svg>Messages and calls are end-to-end</p>
      <p class="tracking-[1.260px]">encrypted. Only people in this chat can</p>
      <p class="flex tracking-[1.330px]">read, listen to, or share them. <b class="ml-[12px] font-extrabold tracking-[2px]">Learn</b></p>
      <p><b class="font-extrabold tracking-[3.300px]">more</b></p>
    </div>

    <div class="relative mt-[40px] ml-[350px] h-[167px] w-[770px] rounded-[34px] bg-[#144d37] pt-[15px] pl-[28.500px] text-[49px] leading-[66px] font-medium whitespace-nowrap">
      <div class="[-webkit-text-stroke:0.6px]">
        <p class="tracking-[0.330px]">Everyone’s asleep… I just feel</p>
        <p class="tracking-[0.350px]">invisible</p>
      </div>
      <svg class="absolute top-[117px] left-[750px] h-[50px] w-[40px]" viewBox="0 0 40 50"><path fill="#144d37" d="M19.500 0C19.500 23 24 36 39.500 49.600 29 50.500 17 48 9.500 41L-4 40V0Z"/></svg>
      <div class="absolute right-[28px] bottom-[18px] flex items-center text-[35px] leading-[35px] text-[#9fb8ad]"><span class="tracking-[3px]">1:46</span><span class="ml-[3px]">PM</span><svg class="ml-[10px] h-[30px] w-[46px]" viewBox="0 0 46 30" fill="none" stroke="#53bdeb" stroke-width="4.200" stroke-linecap="round" stroke-linejoin="round"><path d="M2 20.500 9.500 27.500 31 2.500M20.500 24.500 24 27.500 44 2.500"/></svg></div>
    </div>

    <div class="relative mt-[40px] ml-[50px] h-[299px] w-[839px] rounded-[34px] bg-[#242625] pt-[15px] pl-[28.500px] text-[49px] leading-[66px] font-medium whitespace-nowrap">
      <div class="[-webkit-text-stroke:0.6px]">
        <p class="flex items-center"><span class="w-[465.500px] tracking-[0.330px]">You’re not invisible</span><svg class="mb-[2px] h-[62px] w-[61px]" viewBox="0 0 61 62"><defs><linearGradient id="mn" x1=".7" y1="0" x2=".5" y2="1"><stop offset="0" stop-color="#ffd21f"/><stop offset=".5" stop-color="#fbdb58"/><stop offset="1" stop-color="#f0b92c"/></linearGradient></defs><path fill="url(#mn)" d="M39 .5C52 6 60.500 17 60.500 31 60.500 48 47 61.500 30 61.500 16 61.500 5 53 .3 39.800 7 47.500 17 50.500 27 49 40 47 49 37 49 23 49 14 45 6 39 .5Z"/><path fill="none" stroke="#ffef7a" stroke-width="1.800" d="M2.500 43C9 49.500 18 52 27 50.300 41 48 50.500 37 50.300 23 50 15 47.500 9 43.500 4.500"/></svg><span class="ml-[17px]">I see you.</span></p>
        <p class="tracking-[0.600px]">What you’re doing matters</p>
        <p>deeply, even if no one else</p>
        <p class="tracking-[0.400px]">notices right now.</p>
      </div>
      <div class="absolute right-[29px] bottom-[18px] flex text-[35px] leading-[35px] text-[#a0a1a1]"><span class="tracking-[3.100px]">1:46</span><span class="ml-[3px]">PM</span></div>
    </div>

    <div class="relative mt-[14px] ml-[50px] h-[218px] w-[857px] rounded-[34px] bg-[#242625] pt-[15px] pl-[28.500px] text-[49px] leading-[66px] font-medium whitespace-nowrap">
      <div class="[-webkit-text-stroke:0.6px]">
        <p class="tracking-[0.360px]">Want me to share a short calming</p>
        <p class="tracking-[0.160px]">exercise while you hold baby?</p>
      </div>
      <svg class="absolute bottom-0 left-[-20px] h-[50px] w-[40px]" viewBox="0 0 40 50"><path fill="#242625" d="M20.500 0C20.500 23 16 36 1.500 49.600 11 50.500 23 48 30.500 41L44 40V0Z"/></svg>
      <div class="absolute right-[29px] bottom-[18px] flex text-[35px] leading-[35px] text-[#a0a1a1]"><span class="tracking-[3.200px]">1:47</span><span class="ml-[4px]">PM</span></div>
    </div>

    <div class="relative mt-[40px] ml-[575px] h-[101px] w-[545px] rounded-[34px] bg-[#144d37] pt-[15px] pl-[29px] text-[49px] leading-[66px] font-medium whitespace-nowrap">
      <p class="tracking-[-0.050px] [-webkit-text-stroke:0.6px]">Yes please</p>
      <svg class="absolute top-[51px] left-[525px] h-[50px] w-[40px]" viewBox="0 0 40 50"><path fill="#144d37" d="M19.500 0C19.500 23 24 36 39.500 49.600 29 50.500 17 48 9.500 41L-4 40V0Z"/></svg>
      <div class="absolute right-[28px] bottom-[18px] flex items-center text-[35px] leading-[35px] text-[#9fb8ad]"><span class="tracking-[3px]">1:47</span><span class="ml-[4px]">PM</span><svg class="ml-[10px] h-[30px] w-[46px]" viewBox="0 0 46 30" fill="none" stroke="#53bdeb" stroke-width="4.200" stroke-linecap="round" stroke-linejoin="round"><path d="M2 20.500 9.500 27.500 31 2.500M20.500 24.500 24 27.500 44 2.500"/></svg></div>
    </div>

    <div class="relative mt-[40px] ml-[50px] h-[365px] w-[842px] rounded-[34px] bg-[#242625] pt-[15px] pl-[28.500px] text-[49px] leading-[66px] font-medium whitespace-nowrap">
      <div class="[-webkit-text-stroke:0.6px]">
        <p class="tracking-[0.240px]">Close your eyes for 10 seconds</p>
        <p class="flex items-center pl-[3.500px] tracking-[0.300px]"><svg class="mr-[18px] mb-[4px] size-[60px]" viewBox="0 0 60 60"><defs><linearGradient id="ng" x1="0" y1="0" x2="0" y2="1"><stop offset="0" stop-color="#05060f"/><stop offset=".45" stop-color="#142a55"/><stop offset=".8" stop-color="#0f3f56"/><stop offset="1" stop-color="#0a0f3c"/></linearGradient></defs><rect width="60" height="60" fill="#fff"/><rect x="4" y="4" width="52" height="52" fill="url(#ng)"/><path fill="#3f4f9c" fill-opacity=".55" d="M4 32C20 26 34 22 46 8L56 6V22C44 32 24 38 4 40Z"/><path fill="#050d26" d="M4 49q7-4 13 0 8-5 14 0 6-3 10-1 8-4 15 0v8H4z"/><g fill="#9fe3fb"><circle cx="44" cy="7" r=".8"/><circle cx="48" cy="10" r="1.200"/><circle cx="44" cy="14" r="1.400"/><circle cx="37" cy="18" r="1.200"/><circle cx="43" cy="20" r="1"/><circle cx="38" cy="25" r="1.500"/><circle cx="46" cy="29" r="1.500"/><circle cx="16" cy="29" r="1.500"/><circle cx="31" cy="30" r="1.100"/><circle cx="23" cy="32" r="1"/><circle cx="36" cy="33" r="1"/><circle cx="9" cy="36" r="1.300"/><circle cx="14" cy="36" r="1.200"/><circle cx="21" cy="36" r="1.300"/><circle cx="28" cy="36" r="1"/><circle cx="32" cy="39" r="1.500"/></g></svg>Imagine rocking by a calm</p>
        <p class="tracking-[0.420px]">lake at night. Each breath makes</p>
        <p class="pl-[1px] tracking-[0.480px]">the water smoother. You’re both</p>
        <p class="tracking-[0.400px]">safe.</p>
      </div>
      <svg class="absolute bottom-0 left-[-20px] h-[50px] w-[40px]" viewBox="0 0 40 50"><path fill="#242625" d="M20.500 0C20.500 23 16 36 1.500 49.600 11 50.500 23 48 30.500 41L44 40V0Z"/></svg>
      <div class="absolute right-[29px] bottom-[18px] flex text-[35px] leading-[35px] text-[#a0a1a1]"><span class="tracking-[3.200px]">1:47</span><span class="ml-[4px]">PM</span></div>
    </div>
  </div>
</main>

<footer class="flex h-[156px] shrink-0 items-start bg-[#101010] pt-[22px] pl-[40px]">
  <div class="flex h-[90px] items-center">
    <svg class="mb-[2px] size-[62px]" viewBox="0 0 62 62" stroke="#fff" stroke-width="5.500" stroke-linecap="round"><path d="M31 3.500V58.500M3.500 31H58.500"/></svg>
    <div class="ml-[39px] flex h-[90px] w-[624px] items-center justify-end rounded-full border border-[#3d3d3d] bg-[#272727] pr-[33px]">
      <svg class="mb-[2px] h-[57px] w-[57px]" viewBox="0 0 57 57" fill="none" stroke="#fafafa" stroke-width="4.400" stroke-linejoin="round"><path d="M54.700 23C54.700 8.500 48.500 2.300 34 2.300H23C8.500 2.300 2.300 8.500 2.300 23V34C2.300 48.500 9 54.600 23 54.600C36 54.600 54.700 40 54.700 26ZM54 30H46C36.500 30 31.500 34.500 31.500 43.500C31.500 48 31 51 29.500 54"/></svg>
    </div>
    <svg class="mb-[2px] ml-[59px] size-[62px]" viewBox="0 0 62 62" fill="none" stroke="#fafafa" stroke-width="5" stroke-linejoin="round"><circle cx="31" cy="31" r="28.500"/><path stroke-width="4.200" stroke-linecap="round" d="M20.500 16.500H41M20.500 25H41M20.500 16.500H26.500C38.500 16.500 38.500 34 26.500 34H21.500L33.500 47.500"/></svg>
    <svg class="mb-[2px] ml-[57px] h-[56px] w-[71px]" viewBox="0 0 71 56" fill="none" stroke="#fafafa" stroke-width="5" stroke-linejoin="round"><path d="M8 9.500H17C23 9.500 22.500 2.500 28.500 2.500H42.500C48.500 2.500 48 9.500 54 9.500H63Q68.500 9.500 68.500 14.500V48.500Q68.500 53.500 63 53.500H8Q2.500 53.500 2.500 48.500V14.500Q2.500 9.500 8 9.500Z"/><circle cx="35.500" cy="30.700" r="13.500" stroke-width="4.500"/><circle cx="56.300" cy="20" r="3.700" fill="#fafafa" stroke="none"/></svg>
    <svg class="mb-[6px] ml-[57px] h-[71px] w-[49px]" viewBox="0 0 49 71" fill="none" stroke="#fafafa" stroke-width="4.800" stroke-linecap="round"><rect x="13.700" y="2.500" width="21.600" height="44.500" rx="10.800"/><path d="M2.500 36.500C2.500 50 12 58.500 24.500 58.500S46.500 50 46.500 36.500M24.500 58.500V68.500"/></svg>
  </div>
</footer>
</div>

<script>
// Small confetti rings of the wallpaper: [originX, originY, scaleY, {radius: [x, y, ...]}]
const rings = [
  [0,0,.3333,{5.5:[155,540,197,546,237,551],6.3:[612,542,387,618,318,856,522,942,1031,812,1188,858],10:[501,615],13.5:[1102,931]}],
  [570,0,.3333,{6.3:[318,543,621,558,549,612,250,699,1094,607,1279,501,1360,679,987,916,155,964,1399,985],8:[880,624],10:[1220,587]}],
  [0,330,.3333,{6.3:[300,148,12,236,117,279,174,564,398,636,337,798,611,850,852,905,443,919,318,1013,55,1173,331,1165,235,1348,583,1225,623,1377,766,1360,888,1306,1034,27,453,95,1386,930],10:[325,51,113,387,438,523,96,1047,461,1216],13.5:[340,906,844,1179,1238,902]}],
  [570,330,.3333,{6.3:[1346,68,1453,236,1560,279,1320,338,1311,577,315,843,669,836,1255,856,1497,1173,1399,0],10:[1219,347,1556,387,247,910,1144,876,1538,1047]}],
  [0,820,.3699,{6.3:[85,168,77,567,20,883,75,1273,1077,900],10:[1162,42,155,1542,1240,1555],13.5:[377,885,1187,915],12:[946,1492]}],
  [570,820,.3699,{6.3:[283,39,1287,20,1281,115,1527,168,1263,348,1169,553,1253,548,1519,567,1056,675,1462,883,1221,1003,1223,1137,1517,1273,1305,1543,325,1518],10:[580,5,961,-5,1220,51,1355,155,858,275,896,447,1220,427,1310,659,911,727,1357,864,1210,1290,1341,1388],13.5:[1300,1051]}],
  [0,1390,.3571,{6.3:[1215,105,554,143,545,255,940,282,134,399,635,384,101,998,286,1518,660,1518,977,1520,1548,1514],10:[125,153,275,166,941,65],13.5:[474,187,96,293,101,1367],9:[1092,480]}],
  [570,1390,.3571,{6.3:[1398,428,996,521,1140,732,1159,887,911,1024,872,1138,1043,1228,1287,1361,936,1449,1543,998,1551,1468,59,1514,287,1508,761,1541,1122,80,1224,80],10:[417,28,1014,47,1412,27,1043,422,1007,670,1380,1133,883,1511,276,362],13.5:[1538,293,1542,1367,951,1108]}],
  [0,1920,.3333,{6.3:[155,103,436,180,59,257,662,248,820,301,854,406,537,431,235,490,1131,343,1307,156,1458,268],10:[1059,130,556,283,1196,270,1018,467,221,603,628,628]}],
  [570,1920,.3333,{6.3:[654,176,111,258,412,323,793,381,1026,159,1047,280,1501,257,1308,275,1406,315,1192,492,1300,608,877,628,510,588,1279,733],10:[498,153,1127,226,1325,406,1260,503,1380,755],13.5:[600,649,789,146,953,240],18:[883,168]}]
];
const layer = document.getElementById('bubbles');
for (const [ox, oy, sy, sizes] of rings)
  for (const r in sizes)
    for (let i = 0; i < sizes[r].length; i += 2) {
      const c = document.createElementNS('http://www.w3.org/2000/svg', 'circle');
      c.setAttribute('cx', ox + sizes[r][i] * .3827);
      c.setAttribute('cy', oy + sizes[r][i + 1] * sy);
      c.setAttribute('r', r);
      layer.appendChild(c);
    }
</script>
</body>
</html>
